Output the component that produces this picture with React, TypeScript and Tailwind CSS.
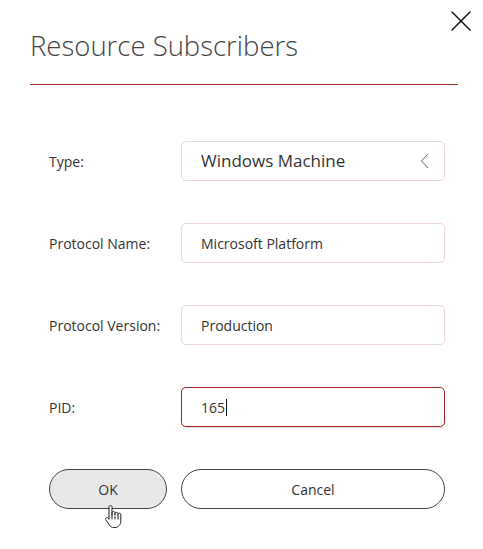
import { X } from "lucide-react";

const fieldBox =
	"flex h-[40px] w-[264px] shrink-0 items-center rounded-[5px] border bg-white pl-[19px] pr-[14px]";

function Row({
	label,
	children,
	className = "",
}: {
	label: string;
	children: React.ReactNode;
	className?: string;
}) {
	return (
		<div className={`flex items-center ${className}`}>
			<label className="w-[132px] shrink-0 text-[14px] text-[#333]">{label}</label>
			{children}
		</div>
	);
}

function HandCursor() {
	return (
		<svg
			className="absolute left-[104px] top-[504px]"
			width="20"
			height="26"
			viewBox="0 0 20 26"
		>
			<path
				d="M6.5 1.5c.9 0 1.5.6 1.5 1.5v8.5V9c0-.9.6-1.5 1.5-1.5S11 8.1 11 9v2V9.8c0-.9.6-1.5 1.5-1.5s1.5.6 1.5 1.5v1.7-1c0-.9.6-1.4 1.4-1.4.8 0 1.4.6 1.4 1.4v6.5c0 3.5-2.3 6.5-5.8 6.5H9.8c-2 0-3.3-.9-4.4-2.5L1.8 15.8c-.5-.7-.3-1.6.3-2 .7-.5 1.6-.3 2.1.3L5 15.3V3c0-.9.6-1.5 1.5-1.5z"
				fill="#fff"
				stroke="#222"
				strokeWidth="1"
				strokeLinejoin="round"
			/>
			<path d="M8 11.5v4M11 11.5v4M14 11.5v4" stroke="#222" strokeWidth="1" />
		</svg>
	);
}

export default function App() {
	return (
		<div
			className="relative h-[549px] w-[483px] overflow-hidden bg-white"
			style={{ fontFamily: '"Open Sans", "Noto Sans", sans-serif' }}
		>
			<button className="absolute left-[443px] top-[3px] text-[#111]">
				<X size={36} strokeWidth={1} />
			</button>

			<div className="px-[30px] pt-[27px]">
				<h1 className="text-[27.5px] font-light leading-[38px] text-[#444]">
					Resource Subscribers
				</h1>
				<div className="mt-[19px] h-px w-[428px] bg-[#9b2a2c]" />
			</div>

			<form className="pl-[49px] pt-[56px]">
				<Row label="Type:">
					<div className={`${fieldBox} justify-between border-[#ecd6d8]`}>
						<span className="text-[17px] text-[#333]">Windows Machine</span>
						<svg width="10" height="16" viewBox="0 0 10 16">
							<path d="M8 1 1.5 8 8 15" fill="none" stroke="#666" strokeWidth="1" />
						</svg>
					</div>
				</Row>
				<Row label="Protocol Name:" className="mt-[42px]">
					<div className={`${fieldBox} border-[#ecd6d8]`}>
						<span className="text-[14px] text-[#333]">Microsoft Platform</span>
					</div>
				</Row>
				<Row label="Protocol Version:" className="mt-[42px]">
					<div className={`${fieldBox} border-[#ecd6d8]`}>
						<span className="text-[14px] text-[#333]">Production</span>
					</div>
				</Row>
				<Row label="PID:" className="mt-[42px]">
					<div
						className={`${fieldBox} border-[#a4262c] shadow-[0_1px_2px_rgba(0,0,0,0.15)]`}
					>
						<span className="text-[14px] text-[#333]">165</span>
						<span className="ml-px h-[17px] w-px bg-[#111]" />
					</div>
				</Row>

				<div className="mt-[42px] flex gap-[14px]">
					<button
						type="button"
						className="h-[40px] w-[118px] shrink-0 rounded-full border border-[#444] bg-[#e8e8e8] text-[14px] text-[#333]"
					>
						OK
					</button>
					<button
						type="button"
						className="h-[40px] w-[264px] shrink-0 rounded-full border border-[#444] bg-white text-[14px] text-[#333]"
					>
						Cancel
					</button>
				</div>
			</form>

			<HandCursor />
		</div>
	);
}
